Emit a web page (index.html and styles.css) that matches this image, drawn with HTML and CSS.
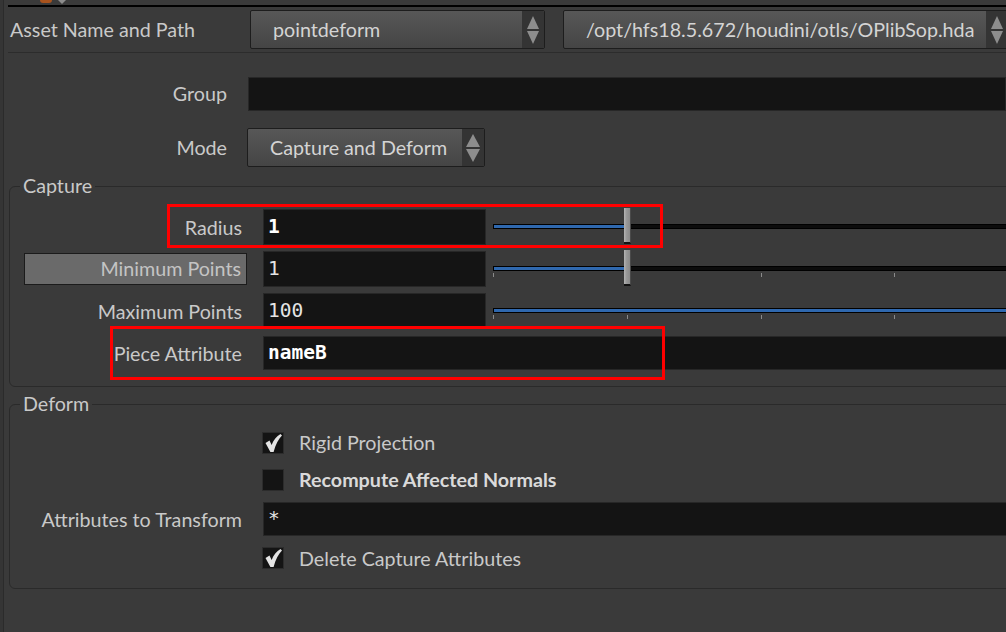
FILE: index.html
```html
<!DOCTYPE html>
<html lang="en">
<head>
    <meta charset="UTF-8">
    <title>pointdeform</title>
    <link rel="stylesheet" href="styles.css">
</head>
<body>
    <div class="panel">
        <div class="topbar">
            <span class="node-icon"></span>
            <span class="node-caret"></span>
        </div>

        <div class="asset-row">
            <span class="asset-label">Asset Name and Path</span>
            <div class="menu menu-name">
                <span class="menu-text">pointdeform</span>
                <span class="menu-arrows">
                    <svg width="12" height="28" viewBox="0 0 12 28"><polygon points="6,0 12,13 0,13" fill="#8d8d8d"/><polygon points="0,15 12,15 6,28" fill="#8d8d8d"/></svg>
                </span>
            </div>
            <div class="menu menu-path">
                <span class="menu-text">/opt/hfs18.5.672/houdini/otls/OPlibSop.hda</span>
                <span class="menu-arrows">
                    <svg width="12" height="28" viewBox="0 0 12 28"><polygon points="6,0 12,13 0,13" fill="#8d8d8d"/><polygon points="0,15 12,15 6,28" fill="#8d8d8d"/></svg>
                </span>
            </div>
        </div>

        <div class="parm-row row-group">
            <label class="parm-label">Group</label>
            <div class="field field-wide"></div>
        </div>

        <div class="parm-row row-mode">
            <label class="parm-label">Mode</label>
            <div class="menu menu-mode">
                <span class="menu-text">Capture and Deform</span>
                <span class="menu-arrows">
                    <svg width="14" height="28" viewBox="0 0 14 28"><polygon points="7,0 14,13 0,13" fill="#8d8d8d"/><polygon points="0,15 14,15 7,28" fill="#8d8d8d"/></svg>
                </span>
            </div>
        </div>

        <fieldset class="folder folder-capture">
            <legend>Capture</legend>

            <div class="parm-row">
                <label class="parm-label">Radius</label>
                <div class="field field-bold">1</div>
                <div class="slider">
                    <div class="slider-track"><div class="slider-fill" style="width: 131px"></div></div>
                    <div class="slider-handle" style="left: 131px"></div>
                </div>
                <div class="mark mark-radius"></div>
            </div>

            <div class="parm-row">
                <label class="parm-label parm-button">Minimum Points</label>
                <div class="field">1</div>
                <div class="slider">
                    <div class="slider-track"><div class="slider-fill" style="width: 131px"></div></div>
                    <div class="slider-ticks"><i></i><i></i><i></i><i></i><i></i></div>
                    <div class="slider-handle" style="left: 131px"></div>
                </div>
            </div>

            <div class="parm-row">
                <label class="parm-label">Maximum Points</label>
                <div class="field">100</div>
                <div class="slider">
                    <div class="slider-track"><div class="slider-fill" style="width: 100%"></div></div>
                    <div class="slider-ticks"><i></i><i></i><i></i><i></i><i></i></div>
                </div>
            </div>

            <div class="parm-row">
                <label class="parm-label">Piece Attribute</label>
                <div class="field field-wide field-bold">nameB</div>
                <div class="mark mark-piece"></div>
            </div>
        </fieldset>

        <fieldset class="folder folder-deform">
            <legend>Deform</legend>

            <div class="parm-row check-row">
                <span class="parm-label"></span>
                <span class="checkbox">
                    <svg width="20" height="20" viewBox="0 0 20 20"><path d="M2.5 10 L6.5 7.5 L8.6 12 C10.5 7 13.5 3.5 17.5 1 L19 2.5 C15.5 6 12.5 11.5 10.6 19 L7.4 19 Z" fill="#e4e4e4"/></svg>
                </span>
                <span class="check-label">Rigid Projection</span>
            </div>

            <div class="parm-row check-row">
                <span class="parm-label"></span>
                <span class="checkbox"></span>
                <span class="check-label check-bold">Recompute Affected Normals</span>
            </div>

            <div class="parm-row">
                <label class="parm-label">Attributes to Transform</label>
                <div class="field field-wide">*</div>
            </div>

            <div class="parm-row check-row check-last">
                <span class="parm-label"></span>
                <span class="checkbox">
                    <svg width="20" height="20" viewBox="0 0 20 20"><path d="M2.5 10 L6.5 7.5 L8.6 12 C10.5 7 13.5 3.5 17.5 1 L19 2.5 C15.5 6 12.5 11.5 10.6 19 L7.4 19 Z" fill="#e4e4e4"/></svg>
                </span>
                <span class="check-label">Delete Capture Attributes</span>
            </div>
        </fieldset>
    </div>
</body>
</html>
```

FILE: styles.css
```css
* {
    box-sizing: border-box;
}

body {
    margin: 0;
    background-color: #353535;
    font-family: 'Lato', 'Open Sans', sans-serif;
    font-size: 19.7px;
    color: #c9c9c9;
    overflow: hidden;
}

.panel {
    margin-left: 3px;
    border-left: 1px solid #2b2b2b;
    padding-left: 5px;
    background-color: #3a3a3a;
    height: 632px;
}

/* node header strip */
.topbar {
    display: flex;
    height: 7px;
    margin-left: -1px;
    border-bottom: 2px solid #000;
}

.node-icon {
    margin-left: 32px;
    width: 12px;
    height: 3px;
    background-color: #a9531d;
    border-radius: 0 0 6px 6px;
}

.node-caret {
    margin-left: 6px;
    width: 0;
    height: 0;
    border-left: 4px solid transparent;
    border-right: 4px solid transparent;
    border-top: 4px solid #8c8c8c;
}

.asset-row {
    display: flex;
    align-items: center;
    margin-top: 3px;
    margin-left: -1px;
    padding-bottom: 3px;
    border-bottom: 1px solid #2c2c2c;
}

.asset-label {
    width: 242px;
    padding-left: 2px;
    flex: none;
}

/* drop down menus */
.menu {
    display: flex;
    height: 39px;
    flex: none;
    border: 1px solid #1d1d1d;
    border-radius: 2px;
    background: linear-gradient(#575757, #454545);
    color: #d4d4d4;
    overflow: hidden;
}

.menu-text {
    flex: 1;
    padding-left: 22px;
    line-height: 37px;
    white-space: nowrap;
    overflow: hidden;
}

.menu-arrows {
    width: 22px;
    flex: none;
    display: flex;
    align-items: center;
    justify-content: center;
    background-color: #343434;
}

.menu-name {
    width: 295px;
}

.menu-path {
    width: 446px;
    margin-left: 18px;
}

.menu-mode {
    width: 238px;
}

/* parameter rows */
.parm-row {
    display: flex;
    align-items: center;
    height: 42px;
    position: relative;
}

.parm-label {
    width: 223px;
    flex: none;
    margin-right: 16px;
    padding-right: 5px;
    text-align: right;
    white-space: nowrap;
}

.row-group {
    margin-top: 19px;
    height: 43px;
}

.row-mode {
    margin-top: 13px;
    height: 39px;
}

.row-mode .parm-label {
    margin-right: 15px;
}

.parm-button {
    height: 32px;
    line-height: 30px;
    background-color: #6a6a6a;
    border: 1px solid #1b1b1b;
    color: #c4c4c4;
}

.field {
    width: 223px;
    height: 36px;
    flex: none;
    padding-left: 4px;
    background-color: #141414;
    border: 1px solid #272727;
    font-family: 'DejaVu Sans Mono', monospace;
    font-size: 19.5px;
    line-height: 34px;
    color: #e4e4e4;
}

.field-wide {
    flex: 1;
    width: auto;
    height: 34px;
    line-height: 32px;
}

.field-bold {
    font-weight: bold;
    color: #fff;
}

/* sliders */
.slider {
    flex: 1;
    align-self: stretch;
    position: relative;
    margin-left: 7px;
}

.slider-track {
    margin-top: 18px;
    height: 5px;
    background-color: #0c0c0c;
    border: 1px solid #000;
}

.slider-fill {
    height: 100%;
    background-color: #2f68ae;
}

.slider-ticks {
    display: flex;
    justify-content: space-between;
    width: 536px;
    height: 4px;
    margin-top: 2px;
}

.slider-ticks i {
    width: 1px;
    background-color: #8a8a8a;
}

.slider-handle {
    position: absolute;
    top: 2px;
    width: 7px;
    height: 36px;
    background: linear-gradient(90deg, #b4b4b4, #999 40%, #8a8a8a);
    border-right: 1px solid #4a4a4a;
    border-bottom: 2px solid #111;
}

/* folders */
.folder {
    margin: 8px -30px 0 0;
    padding: 9px 0 12px 14px;
    border: 1px solid #2a2a2a;
    border-radius: 6px 0 0 6px;
    min-width: 0;
}

.folder legend {
    margin-left: -4px;
    padding: 0 3px;
    line-height: 22px;
    color: #c9c9c9;
}

.folder-deform {
    margin-top: 6px;
}

.check-row {
    height: 37px;
}

.check-last {
    height: 36px;
}

.checkbox {
    width: 22px;
    height: 22px;
    margin-left: -1px;
    flex: none;
    display: flex;
    align-items: center;
    justify-content: center;
    background-color: #141414;
    border: 1px solid #2c2c2c;
}

.check-label {
    margin-left: 15px;
    white-space: nowrap;
}

.check-bold {
    font-weight: bold;
    color: #dadada;
}

/* red callout frames */
.mark {
    position: absolute;
    border: 3px solid #f00;
    pointer-events: none;
}

.mark-radius {
    left: 143px;
    top: -2px;
    width: 496px;
    height: 44px;
}

.mark-piece {
    left: 86px;
    top: -6px;
    width: 555px;
    height: 54px;
}
```
